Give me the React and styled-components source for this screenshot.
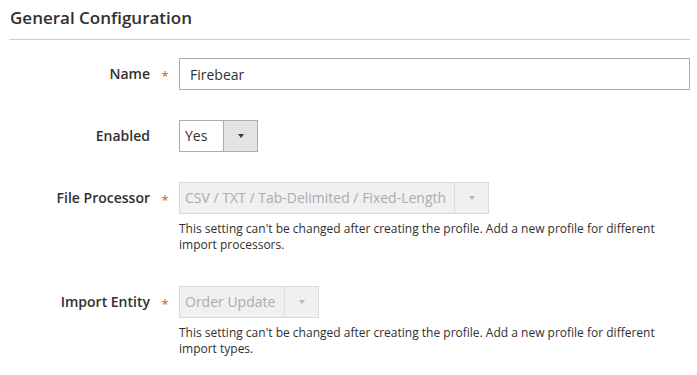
import styled, { createGlobalStyle } from "styled-components";

const GlobalStyle = createGlobalStyle`
  html, body {
    margin: 0;
    padding: 0;
    background: #ffffff;
  }
  body {
    font-family: "Open Sans", "Liberation Sans", sans-serif;
    color: #303030;
  }
`;

const Page = styled.div`
  width: 697px;
  height: 375px;
  padding: 0 7px 0 9px;
  box-sizing: border-box;
  overflow: hidden;
`;

const Title = styled.h2`
  margin: 0;
  padding: 6px 0 9px 1px;
  font-size: 17px;
  line-height: 24px;
  font-weight: 600;
  color: #303030;
  border-bottom: 1px solid #cccccc;
`;

const Fieldset = styled.div`
  display: flex;
  flex-direction: column;
  gap: 30px;
  padding-top: 18px;
`;

const Field = styled.div`
  display: grid;
  grid-template-columns: 141px 29px 1fr;
  align-items: start;
`;

const Label = styled.label`
  font-size: 14px;
  font-weight: 600;
  line-height: 32px;
  text-align: right;
  color: #303030;
`;

const Star = styled.span`
  color: #eb5202;
  font-size: 13px;
  line-height: 28px;
  height: 32px;
  box-sizing: border-box;
  text-align: center;
  padding-top: 4px;
  padding-left: 1px;
`;

const Control = styled.div`
  display: flex;
  flex-direction: column;
  align-items: flex-start;
`;

const TextInput = styled.input`
  width: 100%;
  height: 32px;
  box-sizing: border-box;
  border: 1px solid #adadad;
  padding: 0 10px;
  font-family: inherit;
  font-size: 14px;
  color: #303030;
  background: #ffffff;
  outline: none;
`;

const Select = styled.div`
  display: flex;
  width: ${(p) => p.$width}px;
  height: 32px;
  box-sizing: border-box;
  border: 1px solid ${(p) => (p.$disabled ? "#d9d9d9" : "#adadad")};
  background: ${(p) => (p.$disabled ? "#f0f0f0" : "#ffffff")};
  font-size: 14px;
  color: ${(p) => (p.$disabled ? "#acacac" : "#303030")};
`;

const SelectValue = styled.span`
  flex: 1;
  padding: 0 5px;
  line-height: 30px;
  white-space: nowrap;
`;

const SelectArrow = styled.span`
  width: 33px;
  display: flex;
  align-items: center;
  justify-content: center;
  border-left: 1px solid ${(p) => (p.$disabled ? "#dedede" : "#adadad")};
  background: ${(p) => (p.$disabled ? "#f0f0f0" : "#e3e3e3")};

  &::after {
    content: "";
    border-left: 3.5px solid transparent;
    border-right: 3.5px solid transparent;
    border-top: 4px solid ${(p) => (p.$disabled ? "#b8b8b8" : "#41362f")};
  }
`;

const Note = styled.div`
  margin: 7px 0 3px;
  font-size: 12px;
  line-height: 16px;
  color: #303030;
  max-width: 490px;
`;

const Dropdown = ({ value, width, disabled }) => (
  <Select $width={width} $disabled={disabled}>
    <SelectValue>{value}</SelectValue>
    <SelectArrow $disabled={disabled} />
  </Select>
);

const App = () => {
  return (
    <Page>
      <GlobalStyle />
      <Title>General Configuration</Title>
      <Fieldset>
        <Field>
          <Label>Name</Label>
          <Star>*</Star>
          <Control>
            <TextInput defaultValue="Firebear" />
          </Control>
        </Field>
        <Field>
          <Label>Enabled</Label>
          <Star />
          <Control>
            <Dropdown value="Yes" width={79} />
          </Control>
        </Field>
        <Field>
          <Label>File Processor</Label>
          <Star>*</Star>
          <Control>
            <Dropdown
              value="CSV / TXT / Tab-Delimited / Fixed-Length"
              width={310}
              disabled
            />
            <Note>
              This setting can't be changed after creating the profile. Add a
              new profile for different import processors.
            </Note>
          </Control>
        </Field>
        <Field>
          <Label>Import Entity</Label>
          <Star>*</Star>
          <Control>
            <Dropdown value="Order Update" width={140} disabled />
            <Note>
              This setting can't be changed after creating the profile. Add a
              new profile for different import types.
            </Note>
          </Control>
        </Field>
      </Fieldset>
    </Page>
  );
};

export default App;
